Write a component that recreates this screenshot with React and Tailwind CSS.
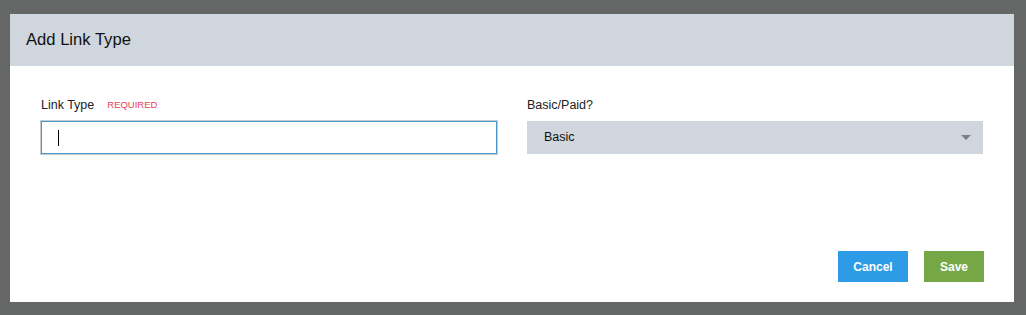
import React from 'react';

const App = () => {
  return (
    <div
      className="w-[1026px] h-[315px] bg-[#656666] pt-[14px] pl-[10px]"
      style={{ fontFamily: '"Liberation Sans", Arial, sans-serif' }}
    >
      <div className="w-[1004px] h-[288px] bg-white flex flex-col">
        {/* header */}
        <div className="h-[52px] bg-[#cfd6de] flex items-center px-[16px]">
          <h2 className="text-[16.6px] text-[#111]">Add Link Type</h2>
        </div>

        {/* form */}
        <div className="grid grid-cols-2 gap-[30px] px-[31px] pt-[31px]">
          <div>
            <div className="flex items-center h-[16px] mb-[8px]">
              <span className="text-[12.5px] text-[#222]">Link Type</span>
              <span className="ml-[13px] text-[9.5px] text-[#e8405a]">REQUIRED</span>
            </div>
            <div className="h-[33px] border border-[#4a98cc] outline outline-1 outline-[#c4ccd2] flex items-center pl-[16px]">
              <div className="w-[1px] h-[16px] bg-black" />
            </div>
          </div>
          <div>
            <div className="flex items-center h-[16px] mb-[8px]">
              <span className="text-[12.5px] text-[#222]">Basic/Paid?</span>
            </div>
            <div className="h-[33px] bg-[#cfd6de] flex items-center justify-between pl-[17px] pr-[12px]">
              <span className="text-[12.5px] text-[#111]">Basic</span>
              <svg width="10" height="6" viewBox="0 0 10 6">
                <path d="M0 0 L10 0 L5 5 Z" fill="#7a7f85" />
              </svg>
            </div>
          </div>
        </div>

        {/* footer */}
        <div className="mt-auto flex justify-end gap-[16px] pr-[30px] pb-[20px]">
          <button className="w-[70px] h-[31px] bg-[#2e9be6] text-white text-[12px] font-bold">Cancel</button>
          <button className="w-[60px] h-[31px] bg-[#76a747] text-white text-[12px] font-bold">Save</button>
        </div>
      </div>
    </div>
  );
};

export default App;
